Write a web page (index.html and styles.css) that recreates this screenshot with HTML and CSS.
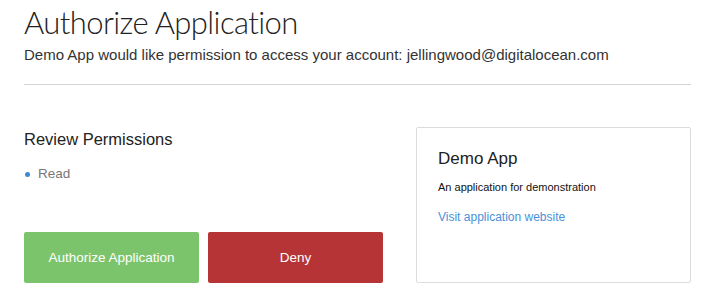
FILE: index.html
```html
<!DOCTYPE html>
<html>
<head>
<meta charset="utf-8">
<link rel="stylesheet" href="styles.css">
</head>
<body>
<div class="page">
  <header class="head">
    <h1 class="title">Authorize Application</h1>
    <p class="subtitle">Demo App would like permission to access your account: jellingwood@digitalocean.com</p>
  </header>
  <div class="main">
    <section class="perms">
      <h2 class="perms-title">Review Permissions</h2>
      <ul class="perm-list">
        <li class="perm-item"><span class="dot"></span>Read</li>
      </ul>
      <div class="actions">
        <button class="btn btn-auth">Authorize Application</button>
        <button class="btn btn-deny">Deny</button>
      </div>
    </section>
    <aside class="card">
      <h3 class="card-title">Demo App</h3>
      <p class="card-desc">An application for demonstration</p>
      <a class="card-link" href="#">Visit application website</a>
    </aside>
  </div>
</div>
</body>
</html>
```

FILE: styles.css
```css
html, body {
  margin: 0;
  padding: 0;
  background: #fff;
}
body {
  font-family: "Liberation Sans", Arial, sans-serif;
  color: #333;
}
.page {
  width: 667px;
  padding: 0 0 0 24px;
}
.head {
  border-bottom: 1px solid #d4d4d4;
  padding-bottom: 19px;
}
.title {
  margin: 0;
  padding-top: 2px;
  font-family: "Lato", sans-serif;
  font-weight: 300;
  font-size: 31px;
  letter-spacing: -0.6px;
  line-height: 40px;
  color: #222;
}
.subtitle {
  margin: 3px 0 0;
  font-size: 15px;
  line-height: 20px;
  color: #333;
}
.main {
  display: flex;
  justify-content: space-between;
  padding-top: 42px;
}
.perms {
  width: 359px;
  display: flex;
  flex-direction: column;
  padding-top: 2px;
}
.perms-title {
  margin: 0;
  font-size: 16.5px;
  font-weight: 400;
  line-height: 20px;
  color: #222;
}
.perm-list {
  list-style: none;
  margin: 16px 0 0;
  padding: 0;
}
.perm-item {
  display: flex;
  align-items: center;
  font-size: 13.5px;
  line-height: 18px;
  color: #777;
}
.dot {
  width: 5px;
  height: 5px;
  border-radius: 50%;
  background: #3b8ad8;
  margin: 0 8px 0 1px;
}
.actions {
  display: flex;
  gap: 9px;
  margin-top: 49px;
}
.btn {
  width: 175px;
  height: 51px;
  border: none;
  border-radius: 2px;
  color: #fff;
  font-family: "Liberation Sans", Arial, sans-serif;
  font-size: 13.5px;
  cursor: pointer;
}
.btn-auth {
  background: #7cc46b;
}
.btn-deny {
  background: #b63436;
}
.card {
  box-sizing: border-box;
  width: 275px;
  height: 156px;
  border: 1px solid #dcdcdc;
  border-radius: 2px;
  padding: 21px 21px 0;
}
.card-title {
  margin: 0;
  font-size: 17px;
  font-weight: 400;
  line-height: 20px;
  color: #222;
}
.card-desc {
  margin: 11px 0 0;
  font-size: 11px;
  line-height: 14px;
  color: #111;
}
.card-link {
  display: block;
  margin-top: 16px;
  font-size: 12px;
  line-height: 15px;
  color: #4a90d9;
  text-decoration: none;
}
```
